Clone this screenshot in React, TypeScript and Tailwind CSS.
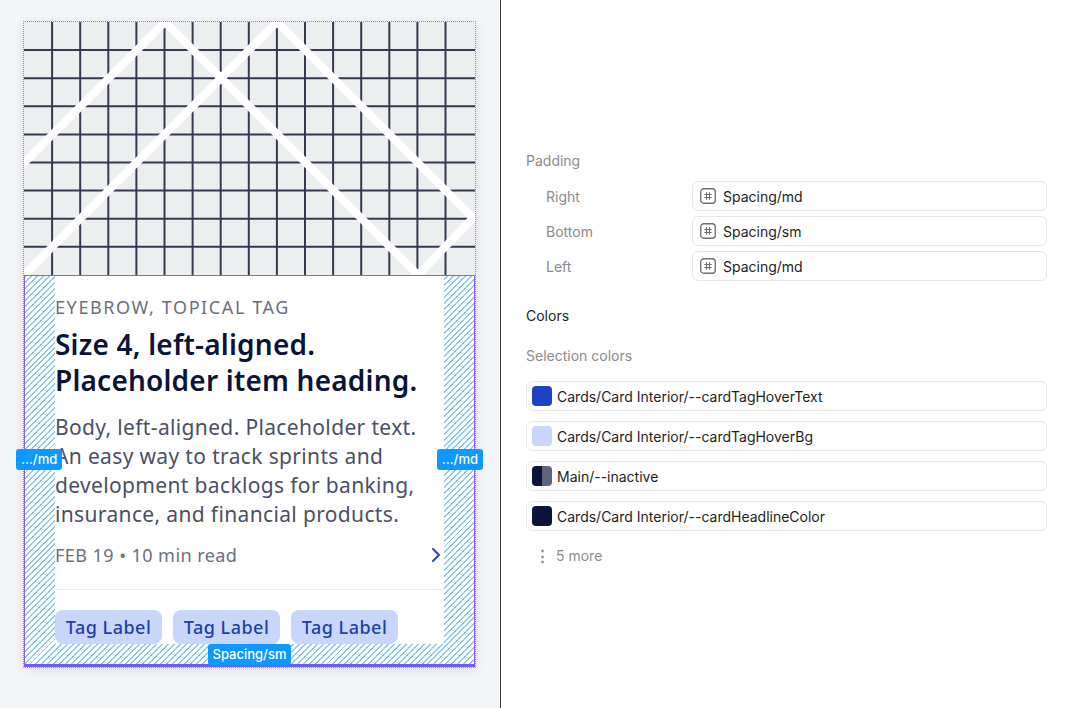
import { ChevronRight } from 'lucide-react';

const hatch =
  'bg-[repeating-linear-gradient(135deg,#8ccaf4_0px,#8ccaf4_1.4px,#ffffff_1.4px,#ffffff_4.2px)]';

function CardArt() {
  const cols = Array.from({ length: 15 }, (_, i) => (i + 1) * 28.1);
  const rows = Array.from({ length: 8 }, (_, i) => (i + 1) * 28.1);
  return (
    <svg viewBox="0 0 451 253" className="block h-[253px] w-[451px]" aria-hidden>
      <rect width="451" height="253" fill="#eceef0" />
      {cols.map((x) => (
        <line key={`c${x}`} x1={x} y1="0" x2={x} y2="253" stroke="#353a50" strokeWidth="2" />
      ))}
      {rows.map((y) => (
        <line key={`r${y}`} x1="0" y1={y} x2="451" y2={y} stroke="#353a50" strokeWidth="2" />
      ))}
      <polyline points="-2,143 141,0 392,251" fill="none" stroke="#ffffff" strokeWidth="8" />
      <polyline
        points="-2,255 253,0 449,196 392,255"
        fill="none"
        stroke="#ffffff"
        strokeWidth="8"
        strokeLinejoin="round"
      />
    </svg>
  );
}

function Badge({ children, className }: { children: string; className: string }) {
  return (
    <span
      className={`absolute flex h-[21px] items-center rounded-[3px] bg-[#0d99ff] px-[5px] font-['Inter',sans-serif] text-[13px] font-medium text-white ${className}`}
    >
      {children}
    </span>
  );
}

function Card() {
  return (
    <div className="w-[451px] bg-white shadow-[0_2px_10px_rgba(15,20,40,0.12)] outline outline-1 outline-dotted outline-[#a77bff]">
      <CardArt />
      <div className={`relative border border-b-[3px] border-[#8a5cff] border-b-[#6d5cf6] px-[30px] pb-[20px] ${hatch}`}>
        <div className="bg-white pt-[19px] font-['Noto_Sans',sans-serif]">
          <p className="text-[18px] leading-[24px] tracking-[1.6px] text-[#6b7081]">EYEBROW, TOPICAL TAG</p>
          <h2 className="mt-[7px] text-[28px] font-semibold leading-[36px] tracking-[0.2px] text-[#0b1438]">
            Size 4, left-aligned.
            <br />
            Placeholder item heading.
          </h2>
          <p className="mt-[15px] text-[21px] leading-[29px] tracking-[0.35px] text-[#4b5064]">
            Body, left-aligned. Placeholder text.
            <br />
            An easy way to track sprints and
            <br />
            development backlogs for banking,
            <br />
            insurance, and financial products.
          </p>
          <div className="mt-[13px] flex items-center justify-between">
            <span className="text-[18px] leading-[26px] tracking-[0.45px] text-[#6b7081]">FEB 19 • 10 min read</span>
            <ChevronRight className="-mr-[4px] h-[24px] w-[24px] text-[#2d4fc0]" strokeWidth={2.2} />
          </div>
          <div className="mt-[21px] h-px bg-[#e8e9ee]" />
          <div className="flex gap-[11px] pt-[20px]">
            {['Tag Label', 'Tag Label', 'Tag Label'].map((t, i) => (
              <span
                key={i}
                className="flex h-[34px] w-[107px] items-center justify-center rounded-[8px] bg-[#c9d6fb] text-[18px] font-medium tracking-[0.5px] text-[#1d3fa8]"
              >
                {t}
              </span>
            ))}
          </div>
        </div>
        <Badge className="left-[-9px] top-[173px]">…/md</Badge>
        <Badge className="right-[-9px] top-[173px]">…/md</Badge>
        <Badge className="bottom-[-1px] left-1/2 -translate-x-1/2">Spacing/sm</Badge>
      </div>
    </div>
  );
}

function HashIcon() {
  return (
    <svg viewBox="0 0 16 16" className="h-4 w-4 shrink-0" fill="none" stroke="#6f6f6f" aria-hidden>
      <rect x="0.75" y="0.75" width="14.5" height="14.5" rx="3" strokeWidth="1.3" />
      <path d="M6.5 4.3v7.4M9.5 4.3v7.4M4.3 6.5h7.4M4.3 9.5h7.4" strokeWidth="1.2" />
    </svg>
  );
}

const paddingRows = [
  ['Right', 'Spacing/md'],
  ['Bottom', 'Spacing/sm'],
  ['Left', 'Spacing/md'],
];

const colorRows: { name: string; swatch: string }[] = [
  { name: 'Cards/Card Interior/--cardTagHoverText', swatch: 'bg-[#1c44c2]' },
  { name: 'Cards/Card Interior/--cardTagHoverBg', swatch: 'bg-[#c8d6fb]' },
  { name: 'Main/--inactive', swatch: 'bg-[linear-gradient(90deg,#0b1438_50%,#5d6482_50%)]' },
  { name: 'Cards/Card Interior/--cardHeadlineColor', swatch: 'bg-[#0b1438]' },
];

function Inspector() {
  return (
    <div className="flex-1 border-l border-[#3b3b3b] bg-white pl-[25px] pr-[22px] pt-[151px] font-['Inter',sans-serif] text-[14px]">
      <p className="leading-[20px] text-[#8c8c8c]">Padding</p>
      <div className="mt-[10px] flex flex-col gap-[5px]">
        {paddingRows.map(([label, value]) => (
          <div key={label} className="flex items-center">
            <span className="w-[166px] pl-[20px] text-[#8c8c8c]">{label}</span>
            <div className="flex h-[30px] flex-1 items-center gap-[7px] rounded-[6px] border border-[#e6e6e6] pl-[7px] text-[#1e1e1e]">
              <HashIcon />
              {value}
            </div>
          </div>
        ))}
      </div>
      <p className="mt-[25px] leading-[20px] text-[#1e1e1e]">Colors</p>
      <p className="mt-[20px] leading-[20px] text-[#8c8c8c]">Selection colors</p>
      <div className="mt-[15px] flex flex-col gap-[10px]">
        {colorRows.map((c) => (
          <div
            key={c.name}
            className="flex h-[30px] items-center gap-[5px] rounded-[6px] border border-[#e6e6e6] pl-[5px] text-[#1e1e1e]"
          >
            <span className={`h-[20px] w-[20px] rounded-[4px] ${c.swatch}`} />
            {c.name}
          </div>
        ))}
      </div>
      <div className="mt-[15px] flex items-center gap-[6px] pl-[9px] leading-[20px] text-[#8c8c8c]">
        <span className="text-[15px] font-bold">⋮</span>
        <span>5 more</span>
      </div>
    </div>
  );
}

export default function App() {
  return (
    <div className="flex h-[708px] w-[1069px] overflow-hidden">
      <div className="w-[500px] shrink-0 bg-[#f4f5f8] pl-[24px] pt-[22px]">
        <Card />
      </div>
      <Inspector />
    </div>
  );
}
